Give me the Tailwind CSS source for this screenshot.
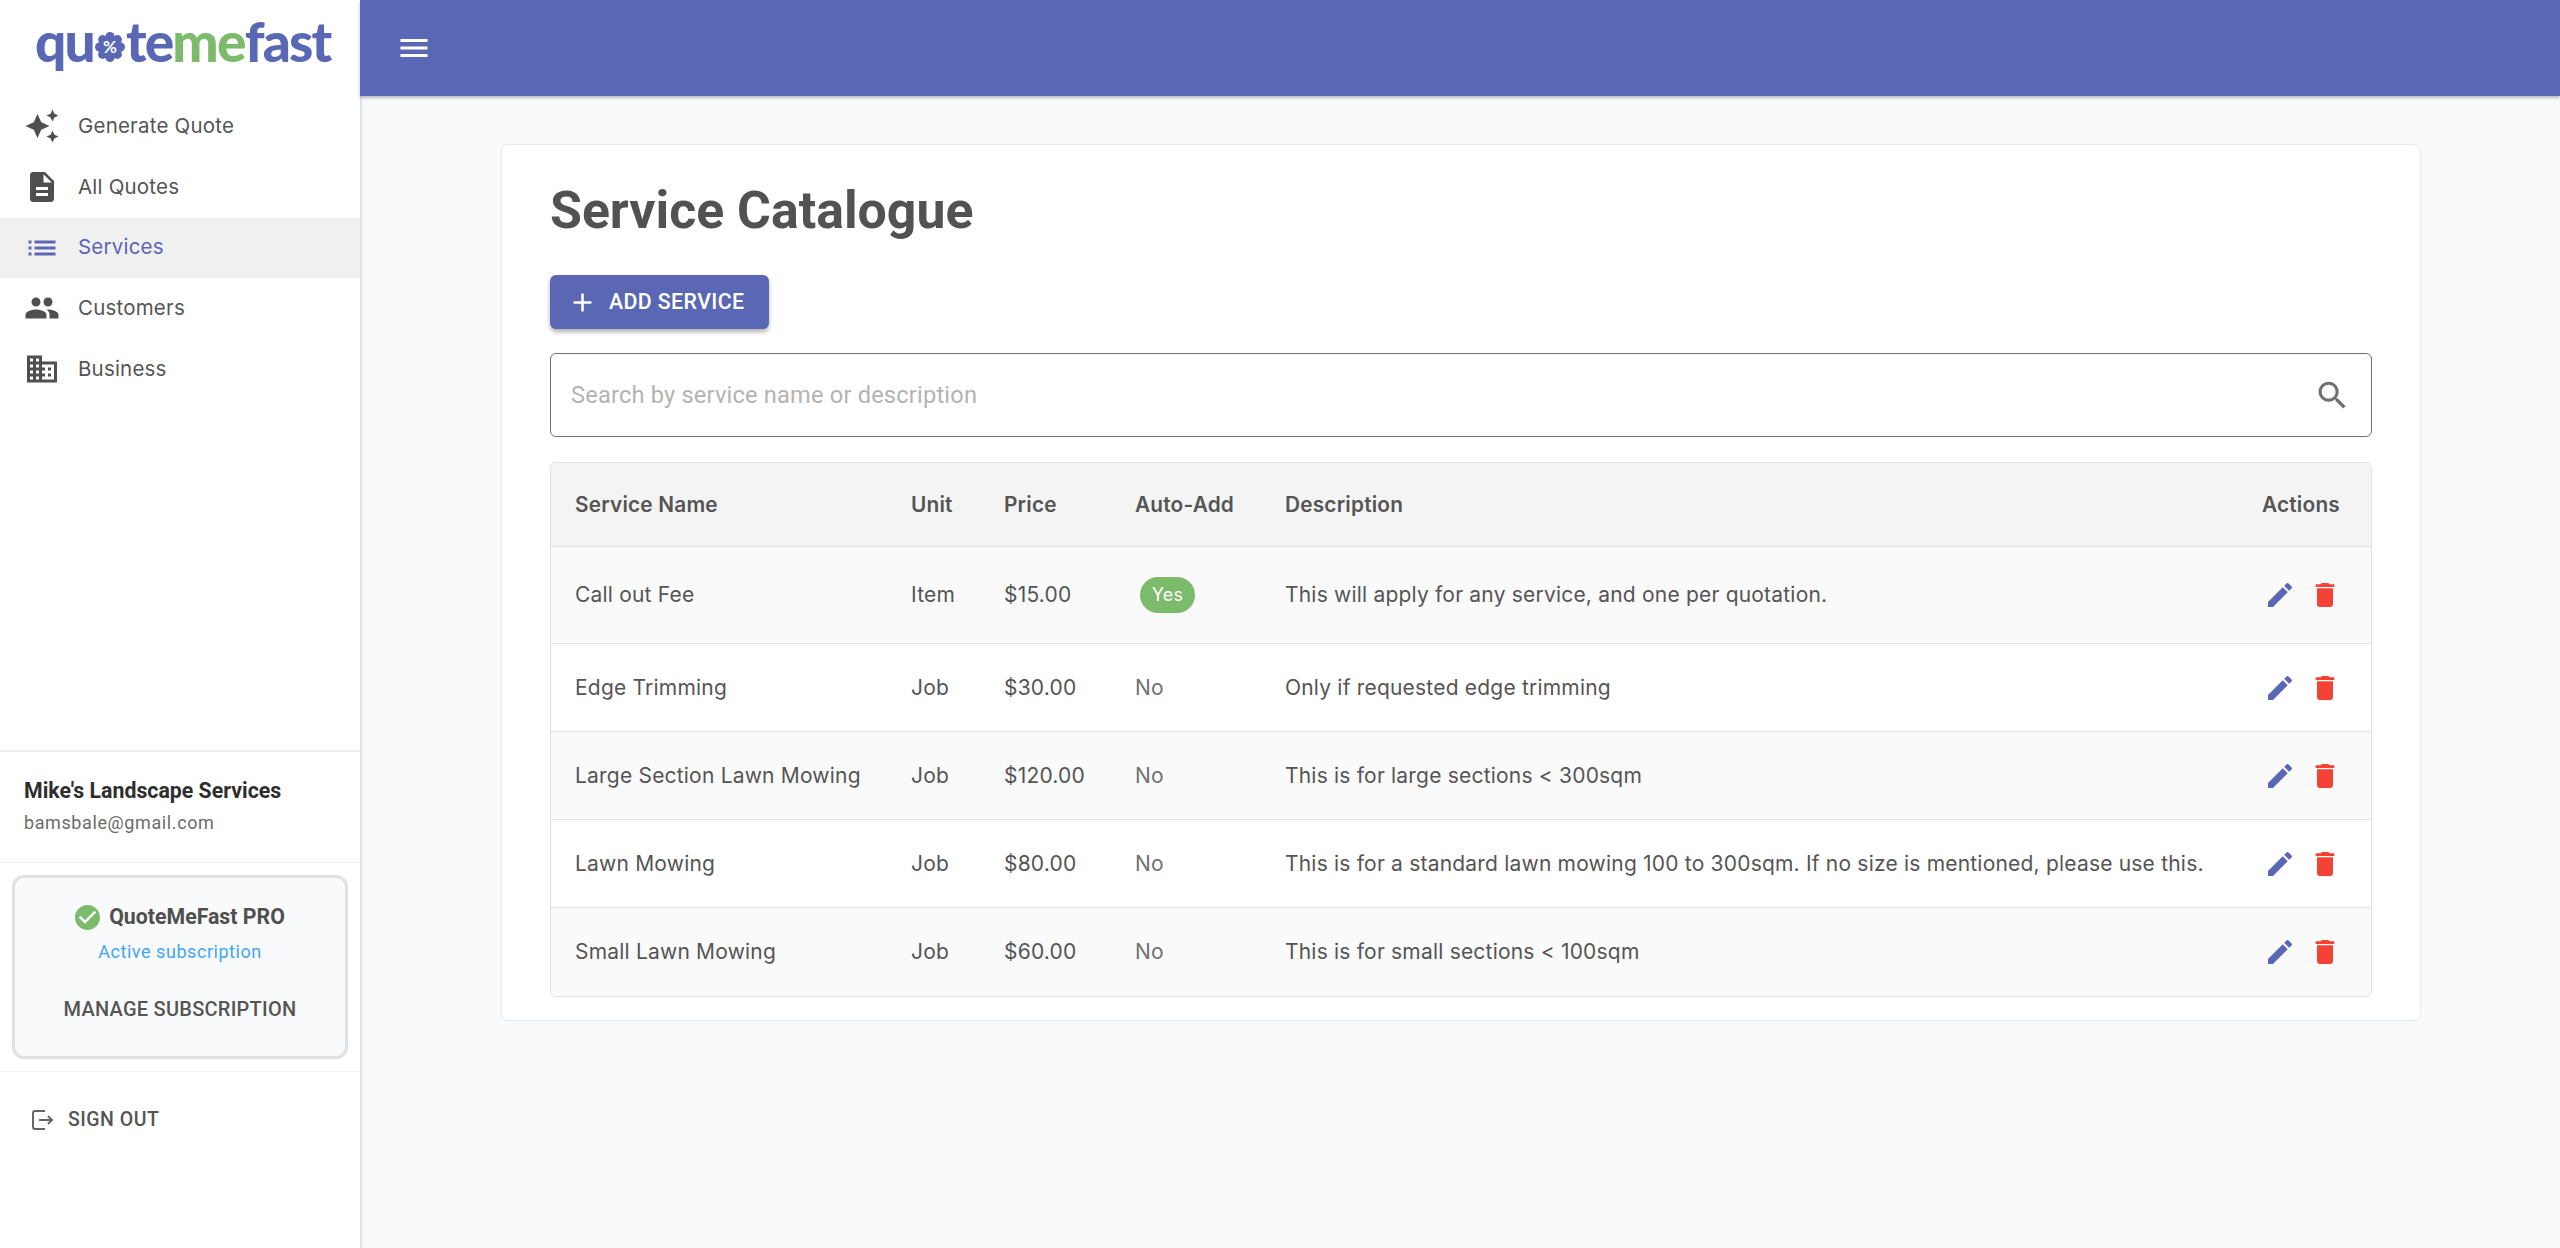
<!DOCTYPE html>
<html lang="en">
<head>
    <meta charset="UTF-8">
    <meta name="viewport" content="width=device-width, initial-scale=1.0">
    <title>QuoteMeFast - Services</title>
    <script src="https://cdn.jsdelivr.net/npm/@tailwindcss/browser@4"></script>
</head>
<body class="bg-[#f9fafc] font-['Inter',sans-serif] text-[#555555]">
<div class="flex h-[1248px] overflow-hidden">
    <!-- sidebar -->
    <aside class="w-[360px] shrink-0 h-full bg-white shadow-[2px_0_1px_rgba(0,0,0,0.09)] flex flex-col">
        <div class="h-[96px] flex items-start pl-[35px] pt-[8px] font-['Lato',sans-serif] font-black text-[55px] leading-[66px] tracking-[-1.8px] text-[#5a67b4]">
            <span>qu</span>
            <svg class="w-[30px] h-[30px] mt-[24px] mx-[1px]" viewBox="0 0 30 30">
                <g fill="#5a67b4">
                    <circle cx="15" cy="15" r="12"/>
                    <circle cx="15" cy="4.5" r="4.5"/><circle cx="15" cy="25.5" r="4.5"/>
                    <circle cx="4.5" cy="15" r="4.5"/><circle cx="25.5" cy="15" r="4.5"/>
                    <circle cx="7.6" cy="7.6" r="4.5"/><circle cx="22.4" cy="7.6" r="4.5"/>
                    <circle cx="7.6" cy="22.4" r="4.5"/><circle cx="22.4" cy="22.4" r="4.5"/>
                </g>
                <text x="15" y="21" text-anchor="middle" font-size="17" font-weight="700" letter-spacing="0" fill="#fff">%</text>
            </svg>
            <span>te</span><span class="text-[#7cba6c]">me</span><span>fast</span>
        </div>
        <nav class="text-[20.5px] tracking-[0.2px]">
            <a class="flex items-center h-[61px] pb-[1px] pl-[24px] gap-[18px]">
                <svg class="w-[36px] h-[36px] fill-[#4f4f4f]" viewBox="0 0 24 24"><path d="M19 9l1.25-2.75L23 5l-2.75-1.25L19 1l-1.25 2.75L15 5l2.75 1.25L19 9zm-7.5.5L9 4 6.5 9.5 1 12l5.5 2.5L9 20l2.5-5.5L17 12l-5.5-2.5zM19 15l-1.25 2.75L15 19l2.75 1.25L19 23l1.25-2.75L23 19l-2.75-1.25L19 15z"/></svg>
                <span>Generate Quote</span>
            </a>
            <a class="flex items-center h-[61px] pb-[1px] pl-[24px] gap-[18px]">
                <svg class="w-[36px] h-[36px] fill-[#4f4f4f]" viewBox="0 0 24 24"><path d="M14 2H6c-1.1 0-1.99.9-1.99 2L4 20c0 1.1.89 2 1.99 2H18c1.1 0 2-.9 2-2V8l-6-6zm2 16H8v-2h8v2zm0-4H8v-2h8v2zm-3-5V3.5L18.5 9H13z"/></svg>
                <span>All Quotes</span>
            </a>
            <a class="flex items-center h-[60px] pb-[1px] pl-[24px] gap-[18px] bg-[#f0f0f0] text-[#5a67b4]">
                <svg class="w-[36px] h-[36px] fill-[#5a67b4]" viewBox="0 0 24 24"><path d="M3 13h2v-2H3v2zm0 4h2v-2H3v2zm0-8h2V7H3v2zm4 4h14v-2H7v2zm0 4h14v-2H7v2zM7 7v2h14V7H7z"/></svg>
                <span>Services</span>
            </a>
            <a class="flex items-center h-[61px] pb-[1px] pl-[24px] gap-[18px]">
                <svg class="w-[36px] h-[36px] fill-[#4f4f4f]" viewBox="0 0 24 24"><path d="M16 11c1.66 0 2.99-1.34 2.99-3S17.66 5 16 5c-1.66 0-3 1.34-3 3s1.34 3 3 3zm-8 0c1.66 0 2.99-1.34 2.99-3S9.66 5 8 5C6.34 5 5 6.34 5 8s1.34 3 3 3zm0 2c-2.33 0-7 1.17-7 3.5V19h14v-2.5c0-2.33-4.67-3.5-7-3.5zm8 0c-.29 0-.62.02-.97.05 1.16.84 1.97 1.97 1.97 3.45V19h6v-2.5c0-2.33-4.67-3.5-7-3.5z"/></svg>
                <span>Customers</span>
            </a>
            <a class="flex items-center h-[61px] pb-[1px] pl-[24px] gap-[18px]">
                <svg class="w-[36px] h-[36px] fill-[#4f4f4f]" viewBox="0 0 24 24"><path d="M12 7V3H2v18h20V7H12zM6 19H4v-2h2v2zm0-4H4v-2h2v2zm0-4H4V9h2v2zm0-4H4V5h2v2zm4 12H8v-2h2v2zm0-4H8v-2h2v2zm0-4H8V9h2v2zm0-4H8V5h2v2zm10 12h-8v-2h2v-2h-2v-2h2v-2h-2V9h8v10zm-2-8h-2v2h2v-2zm0 4h-2v2h2v-2z"/></svg>
                <span>Business</span>
            </a>
        </nav>

        <div class="mt-auto border-t-2 border-[#eeeeee] h-[112px] pl-[24px] pt-[24px] font-['Roboto',sans-serif]">
            <div class="text-[21.3px] leading-[30px] font-bold text-[#2e2e2e]">Mike's Landscape Services</div>
            <div class="text-[18px] leading-[30px] mt-[2px] tracking-[0.6px] text-[#6b6b6b]">bamsbale@gmail.com</div>
        </div>
        <div class="border-t border-b border-t-[#eeeeee] border-b-[#f3f3f3] h-[210px] px-[12px] pt-[12px] font-['Roboto',sans-serif]">
            <div class="h-[184px] rounded-[12px] border-[3px] border-[#e1e1e1] bg-[#f9fafc] flex flex-col items-center pt-[24px]">
                <div class="flex items-center gap-[9px] text-[21.3px] leading-[30px] font-bold text-[#4f4f4f]">
                    <svg class="w-[25px] h-[25px] fill-[#7cba6c]" viewBox="2 2 20 20"><circle cx="12" cy="12" r="9" fill="#fff"/><path d="M12 2C6.48 2 2 6.48 2 12s4.48 10 10 10 10-4.48 10-10S17.52 2 12 2zm-2 15l-5-5 1.41-1.41L10 14.17l7.59-7.59L19 8l-9 9z"/></svg>
                    <span>QuoteMeFast PRO</span>
                </div>
                <div class="text-[18px] leading-[30px] tracking-[0.55px] text-[#42a5f5] mt-[5px]">Active subscription</div>
                <div class="text-[20px] leading-[30px] font-medium tracking-[0.25px] mt-[27px]">MANAGE SUBSCRIPTION</div>
            </div>
        </div>
        <div class="h-[176px] pl-[32px] pt-[33px] font-['Roboto',sans-serif]">
            <div class="flex items-center gap-[14px] text-[19.5px] leading-[30px] font-medium tracking-[0.5px]">
                <svg class="w-[22px] h-[22px] fill-none stroke-[#666666] stroke-2" viewBox="0 0 22 22"><path d="M13 2H3a2 2 0 0 0-2 2v14a2 2 0 0 0 2 2h10"/><path d="M7 11H20M16 7l4 4-4 4"/></svg>
                <span>SIGN OUT</span>
            </div>
        </div>
    </aside>

    <div class="flex-1 min-w-0">
        <header class="h-[96px] bg-[#5a67b4] shadow-[0_2px_3px_rgba(0,0,0,0.25)] flex items-center pl-[36px]">
            <svg class="w-[36px] h-[36px] fill-white" viewBox="0 0 24 24"><path d="M3 18h18v-2H3v2zm0-5h18v-2H3v2zm0-7v2h18V6H3z"/></svg>
        </header>

        <main class="pl-[141px] pt-[48px]">
            <div class="w-[1920px] h-[877px] bg-white border border-[#e8eaee] rounded-[6px] px-[48px] pt-[31px]">
                <h1 class="font-['Roboto',sans-serif] font-bold text-[51.8px] leading-[70px] text-[#525252]">Service Catalogue</h1>

                <button class="mt-[29px] h-[54px] w-[219px] flex items-center rounded-[6px] bg-[#5a67b4] text-white font-['Roboto',sans-serif] font-medium text-[21.3px] tracking-[0.4px] pl-[21px] gap-[15px] shadow-[0_3px_4px_rgba(0,0,0,0.3)]">
                    <svg class="w-[23px] h-[23px] fill-white" viewBox="3 3 18 18"><path d="M19 13h-6v6h-2v-6H5v-2h6V5h2v6h6v2z"/></svg>
                    <span>ADD SERVICE</span>
                </button>

                <div class="mt-[24px] h-[84px] flex items-center justify-between border border-[#707070] rounded-[6px] pl-[20px] pr-[20px]">
                    <span class="font-['Roboto',sans-serif] text-[23.6px] tracking-[0.2px] pt-[2px] text-[#b3b3b3]">Search by service name or description</span>
                    <svg class="w-[37px] h-[37px] fill-[#6f6f6f]" viewBox="0 0 24 24"><path d="M15.5 14h-.79l-.28-.27C15.41 12.59 16 11.11 16 9.5 16 5.91 13.09 3 9.5 3S3 5.91 3 9.5 5.91 16 9.5 16c1.61 0 3.09-.59 4.23-1.57l.27.28v.79l5 4.99L20.49 19l-4.99-5zm-6 0C7.01 14 5 11.99 5 9.5S7.01 5 9.5 5 14 7.01 14 9.5 11.99 14 9.5 14z"/></svg>
                </div>

                <table class="mt-[25px] w-[1822px] table-fixed border-separate border-spacing-0 border border-[#e2e2e2] rounded-[6px] text-[21px] tracking-[0.2px]">
                    <colgroup>
                        <col class="w-[336px]"><col class="w-[93px]"><col class="w-[131px]"><col class="w-[150px]"><col class="w-[977px]"><col class="w-[133px]">
                    </colgroup>
                    <thead>
                        <tr class="h-[84px] bg-[#f4f4f4] text-left">
                            <th class="pl-[24px] font-semibold text-[20.8px] border-b border-[#e2e2e2] rounded-tl-[6px]">Service Name</th>
                            <th class="pl-[24px] font-semibold text-[20.8px] border-b border-[#e2e2e2]">Unit</th>
                            <th class="pl-[24px] font-semibold text-[20.8px] border-b border-[#e2e2e2]">Price</th>
                            <th class="pl-[24px] font-semibold text-[20.8px] border-b border-[#e2e2e2]">Auto-Add</th>
                            <th class="pl-[24px] font-semibold text-[20.8px] border-b border-[#e2e2e2]">Description</th>
                            <th class="pl-[24px] font-semibold text-[20.8px] border-b border-[#e2e2e2] rounded-tr-[6px]">Actions</th>
                        </tr>
                    </thead>
                    <tbody>
                        <tr class="h-[97px] bg-[#fafafa]">
                            <td class="pl-[24px] border-b border-[#e2e2e2]">Call out Fee</td>
                            <td class="pl-[24px] border-b border-[#e2e2e2]">Item</td>
                            <td class="pl-[24px] border-b border-[#e2e2e2]">$15.00</td>
                            <td class="pl-[24px] border-b border-[#e2e2e2]"><span class="inline-block ml-[5px] w-[55px] h-[36px] rounded-full bg-[#7cba6c] text-white text-center text-[18px] leading-[36px]">Yes</span></td>
                            <td class="pl-[24px] border-b border-[#e2e2e2]">This will apply for any service, and one per quotation.</td>
                            <td class="pl-[26px] border-b border-[#e2e2e2]">
                                <div class="flex gap-[13px]">
                                    <svg class="w-[32px] h-[32px] fill-[#5a67b4]" viewBox="0 0 24 24"><path d="M3 17.25V21h3.75L17.81 9.94l-3.75-3.75L3 17.25zM20.71 7.04c.39-.39.39-1.02 0-1.41l-2.34-2.34c-.39-.39-1.02-.39-1.41 0l-1.83 1.83 3.75 3.75 1.83-1.83z"/></svg>
                                    <svg class="w-[32px] h-[32px] fill-[#f44336]" viewBox="0 0 24 24"><path d="M6 19c0 1.1.9 2 2 2h8c1.1 0 2-.9 2-2V7H6v12zM19 4h-3.5l-1-1h-5l-1 1H5v2h14V4z"/></svg>
                                </div>
                            </td>
                        </tr>
                        <tr class="h-[88px] bg-white">
                            <td class="pl-[24px] border-b border-[#e2e2e2]">Edge Trimming</td>
                            <td class="pl-[24px] border-b border-[#e2e2e2]">Job</td>
                            <td class="pl-[24px] border-b border-[#e2e2e2]">$30.00</td>
                            <td class="pl-[24px] border-b border-[#e2e2e2] text-[#707070]">No</td>
                            <td class="pl-[24px] border-b border-[#e2e2e2]">Only if requested edge trimming</td>
                            <td class="pl-[26px] border-b border-[#e2e2e2]">
                                <div class="flex gap-[13px]">
                                    <svg class="w-[32px] h-[32px] fill-[#5a67b4]" viewBox="0 0 24 24"><path d="M3 17.25V21h3.75L17.81 9.94l-3.75-3.75L3 17.25zM20.71 7.04c.39-.39.39-1.02 0-1.41l-2.34-2.34c-.39-.39-1.02-.39-1.41 0l-1.83 1.83 3.75 3.75 1.83-1.83z"/></svg>
                                    <svg class="w-[32px] h-[32px] fill-[#f44336]" viewBox="0 0 24 24"><path d="M6 19c0 1.1.9 2 2 2h8c1.1 0 2-.9 2-2V7H6v12zM19 4h-3.5l-1-1h-5l-1 1H5v2h14V4z"/></svg>
                                </div>
                            </td>
                        </tr>
                        <tr class="h-[88px] bg-[#fafafa]">
                            <td class="pl-[24px] border-b border-[#e2e2e2]">Large Section Lawn Mowing</td>
                            <td class="pl-[24px] border-b border-[#e2e2e2]">Job</td>
                            <td class="pl-[24px] border-b border-[#e2e2e2]">$120.00</td>
                            <td class="pl-[24px] border-b border-[#e2e2e2] text-[#707070]">No</td>
                            <td class="pl-[24px] border-b border-[#e2e2e2]">This is for large sections &lt; 300sqm</td>
                            <td class="pl-[26px] border-b border-[#e2e2e2]">
                                <div class="flex gap-[13px]">
                                    <svg class="w-[32px] h-[32px] fill-[#5a67b4]" viewBox="0 0 24 24"><path d="M3 17.25V21h3.75L17.81 9.94l-3.75-3.75L3 17.25zM20.71 7.04c.39-.39.39-1.02 0-1.41l-2.34-2.34c-.39-.39-1.02-.39-1.41 0l-1.83 1.83 3.75 3.75 1.83-1.83z"/></svg>
                                    <svg class="w-[32px] h-[32px] fill-[#f44336]" viewBox="0 0 24 24"><path d="M6 19c0 1.1.9 2 2 2h8c1.1 0 2-.9 2-2V7H6v12zM19 4h-3.5l-1-1h-5l-1 1H5v2h14V4z"/></svg>
                                </div>
                            </td>
                        </tr>
                        <tr class="h-[88px] bg-white">
                            <td class="pl-[24px] border-b border-[#e2e2e2]">Lawn Mowing</td>
                            <td class="pl-[24px] border-b border-[#e2e2e2]">Job</td>
                            <td class="pl-[24px] border-b border-[#e2e2e2]">$80.00</td>
                            <td class="pl-[24px] border-b border-[#e2e2e2] text-[#707070]">No</td>
                            <td class="pl-[24px] border-b border-[#e2e2e2]">This is for a standard lawn mowing 100 to 300sqm. If no size is mentioned, please use this.</td>
                            <td class="pl-[26px] border-b border-[#e2e2e2]">
                                <div class="flex gap-[13px]">
                                    <svg class="w-[32px] h-[32px] fill-[#5a67b4]" viewBox="0 0 24 24"><path d="M3 17.25V21h3.75L17.81 9.94l-3.75-3.75L3 17.25zM20.71 7.04c.39-.39.39-1.02 0-1.41l-2.34-2.34c-.39-.39-1.02-.39-1.41 0l-1.83 1.83 3.75 3.75 1.83-1.83z"/></svg>
                                    <svg class="w-[32px] h-[32px] fill-[#f44336]" viewBox="0 0 24 24"><path d="M6 19c0 1.1.9 2 2 2h8c1.1 0 2-.9 2-2V7H6v12zM19 4h-3.5l-1-1h-5l-1 1H5v2h14V4z"/></svg>
                                </div>
                            </td>
                        </tr>
                        <tr class="h-[88px] bg-[#fafafa]">
                            <td class="pl-[24px] rounded-bl-[6px]">Small Lawn Mowing</td>
                            <td class="pl-[24px]">Job</td>
                            <td class="pl-[24px]">$60.00</td>
                            <td class="pl-[24px] text-[#707070]">No</td>
                            <td class="pl-[24px]">This is for small sections &lt; 100sqm</td>
                            <td class="pl-[26px] rounded-br-[6px]">
                                <div class="flex gap-[13px]">
                                    <svg class="w-[32px] h-[32px] fill-[#5a67b4]" viewBox="0 0 24 24"><path d="M3 17.25V21h3.75L17.81 9.94l-3.75-3.75L3 17.25zM20.71 7.04c.39-.39.39-1.02 0-1.41l-2.34-2.34c-.39-.39-1.02-.39-1.41 0l-1.83 1.83 3.75 3.75 1.83-1.83z"/></svg>
                                    <svg class="w-[32px] h-[32px] fill-[#f44336]" viewBox="0 0 24 24"><path d="M6 19c0 1.1.9 2 2 2h8c1.1 0 2-.9 2-2V7H6v12zM19 4h-3.5l-1-1h-5l-1 1H5v2h14V4z"/></svg>
                                </div>
                            </td>
                        </tr>
                    </tbody>
                </table>
            </div>
        </main>
    </div>
</div>
</body>
</html>
